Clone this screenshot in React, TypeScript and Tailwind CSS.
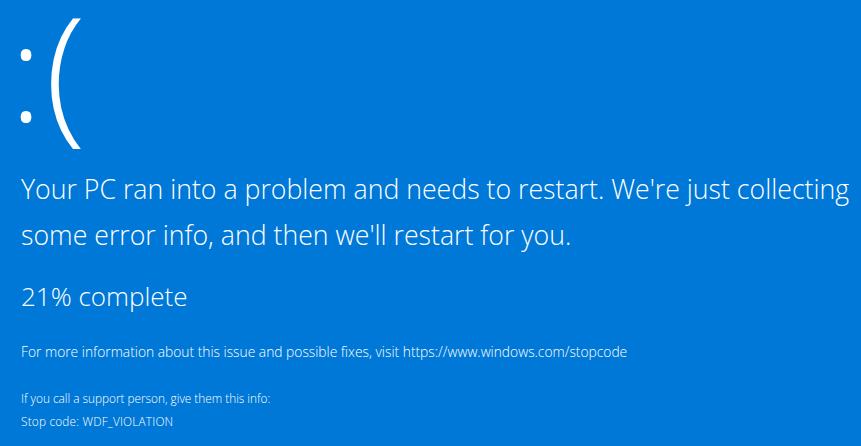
export default function App() {
  return (
    <div className="w-[861px] h-[446px] overflow-hidden bg-[#0078d7] text-white font-['Open_Sans',sans-serif] font-light">
      <div className="flex flex-col pl-[21px]">
        {/* sad face */}
        <div className="h-[166px]">
          <div className="flex items-start">
            <span className="text-[134px] leading-[1.2] -ml-[11px] -mt-[10px]">:</span>
            <span className="text-[150px] leading-[1.2] ml-[3px] -mt-[23px]">(</span>
          </div>
        </div>
        <div className="text-[26.7px] leading-[46px]">
          <p>Your PC ran into a problem and needs to restart. We're just collecting</p>
          <p>some error info, and then we'll restart for you.</p>
        </div>
        <p className="mt-[18px] text-[26px] leading-[40px]">21% complete</p>
        <p className="mt-[26px] text-[13.8px] leading-[20px]">
          For more information about this issue and possible fixes, visit https://www.windows.com/stopcode
        </p>
        <div className="mt-[25px] text-[11.8px] leading-[23px]">
          <p>If you call a support person, give them this info:</p>
          <p className="tracking-[0.2px]">Stop code: WDF_VIOLATION</p>
        </div>
      </div>
    </div>
  );
}
